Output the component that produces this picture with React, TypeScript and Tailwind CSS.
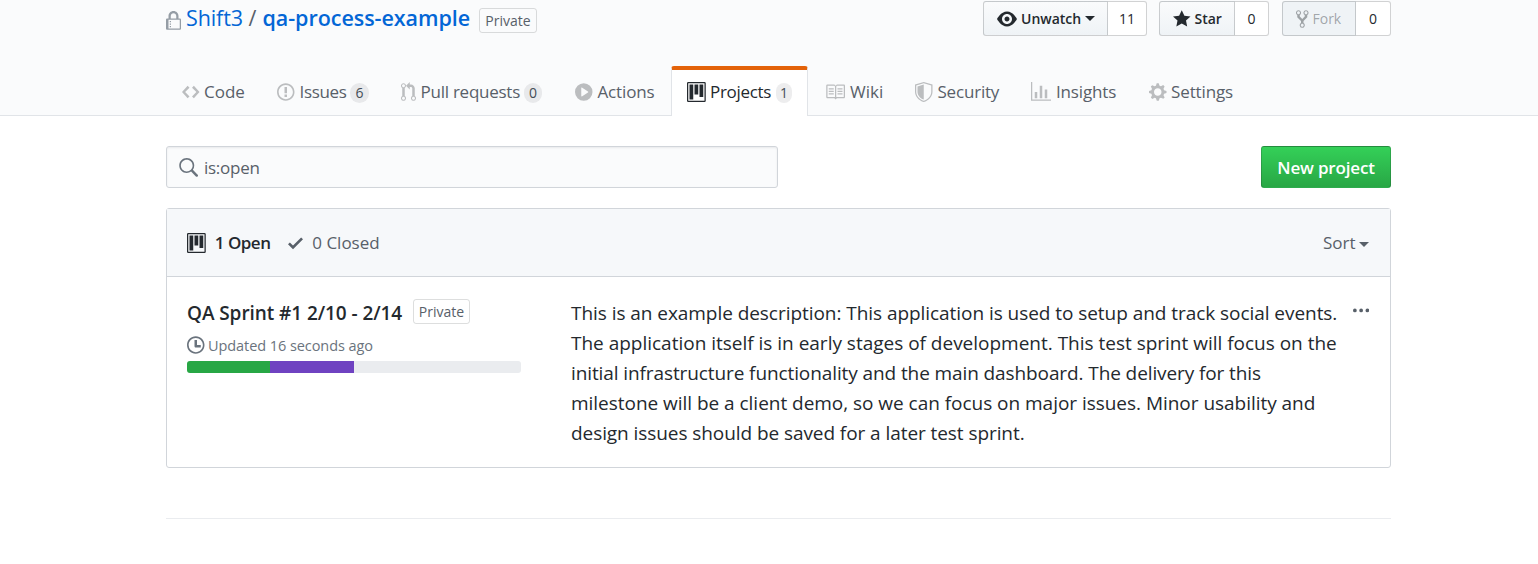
import type { ReactNode } from 'react';

const CIRCLE = 'M7 2.3c3.14 0 5.7 2.56 5.7 5.7s-2.56 5.7-5.7 5.7A5.71 5.71 0 0 1 1.3 8c0-3.14 2.56-5.7 5.7-5.7zM7 1C3.14 1 0 4.14 0 8s3.14 7 7 7 7-3.14 7-7-3.14-7-7-7z';

const icons = {
  lock: { w: 12, d: 'M4 13H3v-1h1v1zm8-6v7c0 .55-.45 1-1 1H1c-.55 0-1-.45-1-1V7c0-.55.45-1 1-1h1V4c0-2.2 1.8-4 4-4s4 1.8 4 4v2h1c.55 0 1 .45 1 1zM3.8 6h4.41V4c0-1.22-.98-2.2-2.2-2.2-1.22 0-2.2.98-2.2 2.2v2H3.8zM11 7H2v7h9V7zM4 8H3v1h1V8zm0 2H3v1h1v-1z' },
  eye: { w: 16, d: 'M8.06 2C3 2 0 8 0 8s3 6 8.06 6C13 14 16 8 16 8s-3-6-7.94-6zM8 12c-2.2 0-4-1.78-4-4 0-2.2 1.8-4 4-4 2.22 0 4 1.8 4 4 0 2.22-1.78 4-4 4zm2-4c0 1.11-.89 2-2 2-1.11 0-2-.89-2-2 0-1.11.89-2 2-2 1.11 0 2 .89 2 2z' },
  star: { w: 14, d: 'M14 6l-4.9-.64L7 1 4.9 5.36 0 6l3.6 3.26L2.67 14 7 11.67 11.33 14l-.93-4.74L14 6z' },
  fork: { w: 10, d: 'M8 1a1.993 1.993 0 0 0-1 3.72V6L5 8 3 6V4.72A1.993 1.993 0 0 0 2 1a1.993 1.993 0 0 0-1 3.72V6.5l3 3v1.78A1.993 1.993 0 0 0 5 15a1.993 1.993 0 0 0 1-3.72V9.5l3-3V4.72A1.993 1.993 0 0 0 8 1zM2 4.2C1.34 4.2.8 3.65.8 3c0-.65.55-1.2 1.2-1.2.65 0 1.2.55 1.2 1.2 0 .65-.55 1.2-1.2 1.2zm3 10c-.66 0-1.2-.55-1.2-1.2 0-.65.55-1.2 1.2-1.2.65 0 1.2.55 1.2 1.2 0 .65-.55 1.2-1.2 1.2zm3-10c-.66 0-1.2-.55-1.2-1.2 0-.65.55-1.2 1.2-1.2.65 0 1.2.55 1.2 1.2 0 .65-.55 1.2-1.2 1.2z' },
  code: { w: 14, d: 'M9.5 3L8 4.5 11.5 8 8 11.5 9.5 13 14 8 9.5 3zm-5 0L0 8l4.5 5L6 11.5 2.5 8 6 4.5 4.5 3z' },
  issue: { w: 14, d: CIRCLE + 'm1 3H6v5h2V4zm0 6H6v2h2v-2z' },
  pull: { w: 12, d: 'M11 11.28V5c-.03-.78-.34-1.47-.94-2.06C9.46 2.35 8.78 2.03 8 2H7V0L4 3l3 3V4h1c.27.02.48.11.69.31.21.2.3.42.31.69v6.28A1.993 1.993 0 0 0 10 15a1.993 1.993 0 0 0 1-3.72zm-1 2.92c-.66 0-1.2-.55-1.2-1.2 0-.65.55-1.2 1.2-1.2.65 0 1.2.55 1.2 1.2 0 .65-.55 1.2-1.2 1.2zM4 3c0-1.11-.89-2-2-2a1.993 1.993 0 0 0-1 3.72v6.56A1.993 1.993 0 0 0 2 15a1.993 1.993 0 0 0 1-3.72V4.72c.59-.34 1-.98 1-1.72zm-.8 10c0 .66-.55 1.2-1.2 1.2-.65 0-1.2-.55-1.2-1.2 0-.65.55-1.2 1.2-1.2.65 0 1.2.55 1.2 1.2zM2 4.2C1.34 4.2.8 3.65.8 3c0-.65.55-1.2 1.2-1.2.65 0 1.2.55 1.2 1.2 0 .65-.55 1.2-1.2 1.2z' },
  play: { w: 14, d: 'M14 8A7 7 0 1 1 0 8a7 7 0 0 1 14 0zm-8.223 3.482l4.599-3.066a.5.5 0 0 0 0-.832L5.777 4.518A.5.5 0 0 0 5 4.934v6.132a.5.5 0 0 0 .777.416z' },
  project: { w: 15, d: 'M10 12h3V2h-3v10zm-4-2h3V2H6v8zm-4 4h3V2H2v12zm-1 1h13V1H1v14zM14 0H1a1 1 0 0 0-1 1v14a1 1 0 0 0 1 1h13a1 1 0 0 0 1-1V1a1 1 0 0 0-1-1z' },
  book: { w: 16, d: 'M3 5h4v1H3V5zm0 3h4V7H3v1zm0 2h4V9H3v1zm11-5h-4v1h4V5zm0 2h-4v1h4V7zm0 2h-4v1h4V9zm2-6v9c0 .55-.45 1-1 1H9.5l-1 1-1-1H2c-.55 0-1-.45-1-1V3c0-.55.45-1 1-1h5.5l1 1 1-1H15c.55 0 1 .45 1 1zm-8 .5L7.5 3H2v9h6V3.5zm7-.5H9.5l-.5.5V12h6V3z' },
  shield: { w: 14, d: 'M0 2l7-2 7 2v6.02C14 12.69 8.69 16 7 16c-1.69 0-7-3.31-7-7.98V2zm1 .75L7 1l6 1.75v5.268C13 12.104 8.449 15 7 15c-1.449 0-6-2.896-6-6.982V2.75zm1 .75L7 2v12c-1.207 0-5-2.482-5-5.985V3.5z' },
  graph: { w: 16, d: 'M16 14v1H0V0h1v14h15zM5 13H3V8h2v5zm4 0H7V3h2v10zm4 0h-2V6h2v7z' },
  gear: { w: 14, d: 'M14 8.77v-1.6l-1.94-.64-.45-1.09.88-1.84-1.13-1.13-1.81.91-1.09-.45-.69-1.92h-1.6l-.63 1.94-1.11.45-1.84-.88-1.13 1.13.91 1.81-.45 1.09L0 7.23v1.59l1.94.64.45 1.09-.88 1.84 1.13 1.13 1.81-.91 1.09.45.69 1.92h1.59l.63-1.94 1.11-.45 1.84.88 1.13-1.13-.92-1.81.47-1.09L14 8.75v.02zM7 11c-1.66 0-3-1.34-3-3s1.34-3 3-3 3 1.34 3 3-1.34 3-3 3z' },
  search: { w: 16, d: 'M15.7 13.3l-3.81-3.83A5.93 5.93 0 0 0 13 6c0-3.31-2.69-6-6-6S1 2.69 1 6s2.69 6 6 6c1.3 0 2.48-.41 3.47-1.11l3.83 3.81c.19.2.45.3.7.3.25 0 .52-.09.7-.3a.996.996 0 0 0 0-1.41v.01zM7 10.7c-2.59 0-4.7-2.11-4.7-4.7 0-2.59 2.11-4.7 4.7-4.7 2.59 0 4.7 2.11 4.7 4.7 0 2.59-2.11 4.7-4.7 4.7z' },
  check: { w: 12, d: 'M12 5l-8 8-4-4 1.5-1.5L4 10l6.5-6.5L12 5z' },
  clock: { w: 14, d: CIRCLE + 'M8 8h3v2H7c-.55 0-1-.45-1-1V4h2v4z' },
  kebab: { w: 13, d: 'M1.5 9a1.5 1.5 0 1 0 0-3 1.5 1.5 0 0 0 0 3zm5 0a1.5 1.5 0 1 0 0-3 1.5 1.5 0 0 0 0 3zM13 7.5a1.5 1.5 0 1 1-3 0 1.5 1.5 0 0 1 3 0z' },
};

type IconName = keyof typeof icons;

function Icon({ name, className = '' }: { name: IconName; className?: string }) {
  const { w, d } = icons[name];
  return (
    <svg viewBox={`0 0 ${w} 16`} width={w * 1.25} height={20} fill="currentColor" className={`shrink-0 ${className}`}>
      <path fillRule="evenodd" d={d} />
    </svg>
  );
}

function Caret({ className = '' }: { className?: string }) {
  return <span className={`border-x-[5px] border-t-[5px] border-x-transparent border-t-current ${className}`} />;
}

function Label({ className = '' }: { className?: string }) {
  return (
    <span className={`flex h-[25px] items-center justify-center rounded-[3px] border border-[#1b1f23]/15 text-[14px] text-[#586069] ${className}`}>
      Private
    </span>
  );
}

function ActionButton({ className, countClass, count, children }: { className: string; countClass: string; count: string; children: ReactNode }) {
  return (
    <div className="flex h-[35px] text-[14px] font-semibold leading-5">
      <button className={`flex items-center rounded-l-[3px] border border-[#1b1f23]/20 ${className}`}>{children}</button>
      <span className={`flex items-center justify-center rounded-r-[3px] border border-l-0 border-[#1b1f23]/20 bg-white font-medium text-[#24292e] ${countClass}`}>{count}</span>
    </div>
  );
}

interface Tab {
  icon: IconName;
  label: string;
  box: string;
  slot: string;
  text: string;
  count?: string;
  countBox?: string;
  active?: boolean;
}

const tabs: Tab[] = [
  { icon: 'code', label: 'Code', box: 'w-[95px]', slot: 'w-[22px]', text: '' },
  { icon: 'issue', label: 'Issues', box: 'w-[124px]', slot: 'w-[22.5px]', text: 'w-[50.5px] tracking-[-0.35px]', count: '6', countBox: 'w-[19px]' },
  { icon: 'pull', label: 'Pull requests', box: 'w-[174px]', slot: 'w-[19.5px]', text: 'w-[103.5px] tracking-[-0.25px]', count: '0', countBox: 'w-[18px]' },
  { icon: 'play', label: 'Actions', box: 'w-[112px]', slot: 'w-[22.5px]', text: 'tracking-[-0.15px]' },
  { icon: 'project', label: 'Projects', box: 'w-[137px] mr-px', slot: 'w-[23px]', text: 'w-[66px] tracking-[-0.3px]', count: '1', countBox: 'w-[16px]', active: true },
  { icon: 'book', label: 'Wiki', box: 'w-[90px]', slot: 'w-[25px]', text: '' },
  { icon: 'shield', label: 'Security', box: 'w-[116px]', slot: 'w-[22.5px]', text: 'tracking-[-0.2px]' },
  { icon: 'graph', label: 'Insights', box: 'w-[118px]', slot: 'w-[25px]', text: 'tracking-[-0.15px]' },
  { icon: 'gear', label: 'Settings', box: 'w-[116px]', slot: 'w-[22px]', text: 'tracking-[-0.12px]' },
];

const description = [
  { line: 'This is an example description: This application is used to setup and track social events.', spacing: 'tracking-[-0.05px]' },
  { line: 'The application itself is in early stages of development. This test sprint will focus on the', spacing: 'tracking-[-0.01px]' },
  { line: 'initial infrastructure functionality and the main dashboard. The delivery for this', spacing: 'tracking-[-0.1px]' },
  { line: 'milestone will be a client demo, so we can focus on major issues. Minor usability and', spacing: 'tracking-[-0.03px]' },
  { line: 'design issues should be saved for a later test sprint.', spacing: 'tracking-[-0.07px]' },
];

export default function App() {
  return (
    <div className="h-[564px] w-full overflow-hidden whitespace-nowrap bg-white font-['Open_Sans','Noto_Sans',sans-serif] text-[17px] text-[#24292e]">
      <header className="flex h-[116px] flex-col justify-between border-b border-[#e1e4e8] bg-[#fafbfc] pl-[166px]">
        <div className="flex w-[1225px] items-start justify-between">
          <h1 className="flex h-9 items-center text-[21.5px] text-[#0366d6]">
            <Icon name="lock" className="mt-[6px] text-[#959da5]" />
            <a className="ml-[5px] w-[62.5px] tracking-[-0.1px]">Shift3</a>
            <span className="w-[14px] text-[#586069]">/</span>
            <a className="w-[216.5px] font-semibold tracking-[-0.05px]">qa-process-example</a>
            <Label className="mt-[5px] w-[58px]" />
          </h1>
          <div className="mt-px flex">
            <ActionButton className="w-[125px] bg-linear-to-b from-[#fafbfc] to-[#eff3f6] pl-[13px]" countClass="w-[39px]" count="11">
              <Icon name="eye" />
              <span className="ml-[4px]">Unwatch</span>
              <Caret className="ml-[4px]" />
            </ActionButton>
            <div className="ml-[12px]">
              <ActionButton className="w-[76px] bg-linear-to-b from-[#fafbfc] to-[#eff3f6] pl-[13px]" countClass="w-[34px]" count="0">
                <Icon name="star" />
                <span className="ml-[4px]">Star</span>
              </ActionButton>
            </div>
            <div className="ml-[13px]">
              <ActionButton className="w-[74px] bg-[#eff3f6] pl-[13px] text-[#24292e]/40" countClass="w-[35px]" count="0">
                <Icon name="fork" />
                <span className="ml-[4px] font-medium">Fork</span>
              </ActionButton>
            </div>
          </div>
        </div>
        <nav className="-mb-px flex">
          {tabs.map((t) => (
            <a
              key={t.label}
              className={`flex h-[50px] shrink-0 items-center pb-[2px] ${t.box} ${
                t.active
                  ? 'rounded-t-[3px] border-x border-t-4 border-x-[#e1e4e8] border-t-[#e36209] bg-white pl-[15px] text-[#24292e]'
                  : 'border-t-4 border-transparent pl-4 text-[#586069]'
              }`}
            >
              <span className={`flex shrink-0 ${t.slot}`}>
                <Icon name={t.icon} className={t.active ? '' : 'text-[#bbbdbf]'} />
              </span>
              <span className={t.text}>{t.label}</span>
              {t.count && (
                <span className={`mt-px flex h-5 items-center justify-center rounded-[20px] bg-[#1b1f23]/8 text-[14px] font-medium text-[#444d56] ${t.countBox}`}>
                  {t.count}
                </span>
              )}
            </a>
          ))}
        </nav>
      </header>

      <main className="ml-[166px] w-[1225px]">
        <div className="mt-[30px] flex h-[42px] justify-between">
          <div className="flex w-[612px] items-center rounded-[3px] border border-[#d1d5da] bg-[#fafbfc] pl-[11px] text-[#586069] shadow-[inset_0_1px_2px_rgba(27,31,35,0.075)]">
            <Icon name="search" className="mt-px text-[#6a737d]" />
            <span className="ml-[6px] mt-[2px] tracking-[-0.27px]">is:open</span>
          </div>
          <button className="flex w-[130px] items-center justify-center rounded-[3px] border border-[#1b1f23]/20 bg-linear-to-b from-[#34d058] to-[#28a745] pt-[2px] font-semibold tracking-[-0.17px] text-white">
            New project
          </button>
        </div>

        <section className="mt-5 h-[260px] rounded-[3px] border border-[#d1d5da]">
          <div className="flex h-[68px] items-center border-b border-[#d1d5da] bg-[#f6f8fa] px-5 text-[#586069]">
            <Icon name="project" className="text-[#24292e]" />
            <span className="ml-[9px] w-[73px] font-semibold tracking-[-0.5px] text-[#24292e]">1 Open</span>
            <Icon name="check" />
            <span className="ml-[9.5px]">0 Closed</span>
            <span className="ml-auto">Sort</span>
            <Caret className="ml-[3.5px] mr-px mt-[3px]" />
          </div>
          <div className="flex px-5 pt-[21px]">
            <div className="w-[384px]">
              <div className="flex h-[30px] items-center">
                <h2 className="w-[226px] text-[19px] font-semibold tracking-[-0.07px]">QA Sprint #1 2/10 - 2/14</h2>
                <Label className="mb-[4px] w-[57px]" />
              </div>
              <div className="mt-[6px] flex h-[22px] items-center text-[14.5px] tracking-[-0.07px] text-[#6a737d]">
                <Icon name="clock" />
                <span className="ml-[3.5px] mt-px">Updated 16 seconds ago</span>
              </div>
              <div className="mt-[5px] flex h-3 w-[334px] overflow-hidden rounded-[3px] bg-[#eaecef]">
                <div className="w-[83px] bg-[#28a745]" />
                <div className="w-[84px] bg-[#6f42c1]" />
              </div>
            </div>
            <p className="text-[19px] leading-[30px]">
              {description.map(({ line, spacing }) => (
                <span key={line} className={`block ${spacing}`}>{line}</span>
              ))}
            </p>
            <Icon name="kebab" className="ml-auto mr-px mt-[3px] text-[#586069]" />
          </div>
        </section>
        <footer className="mt-[50px] border-t border-[#eaecef]" />
      </main>
    </div>
  );
}
